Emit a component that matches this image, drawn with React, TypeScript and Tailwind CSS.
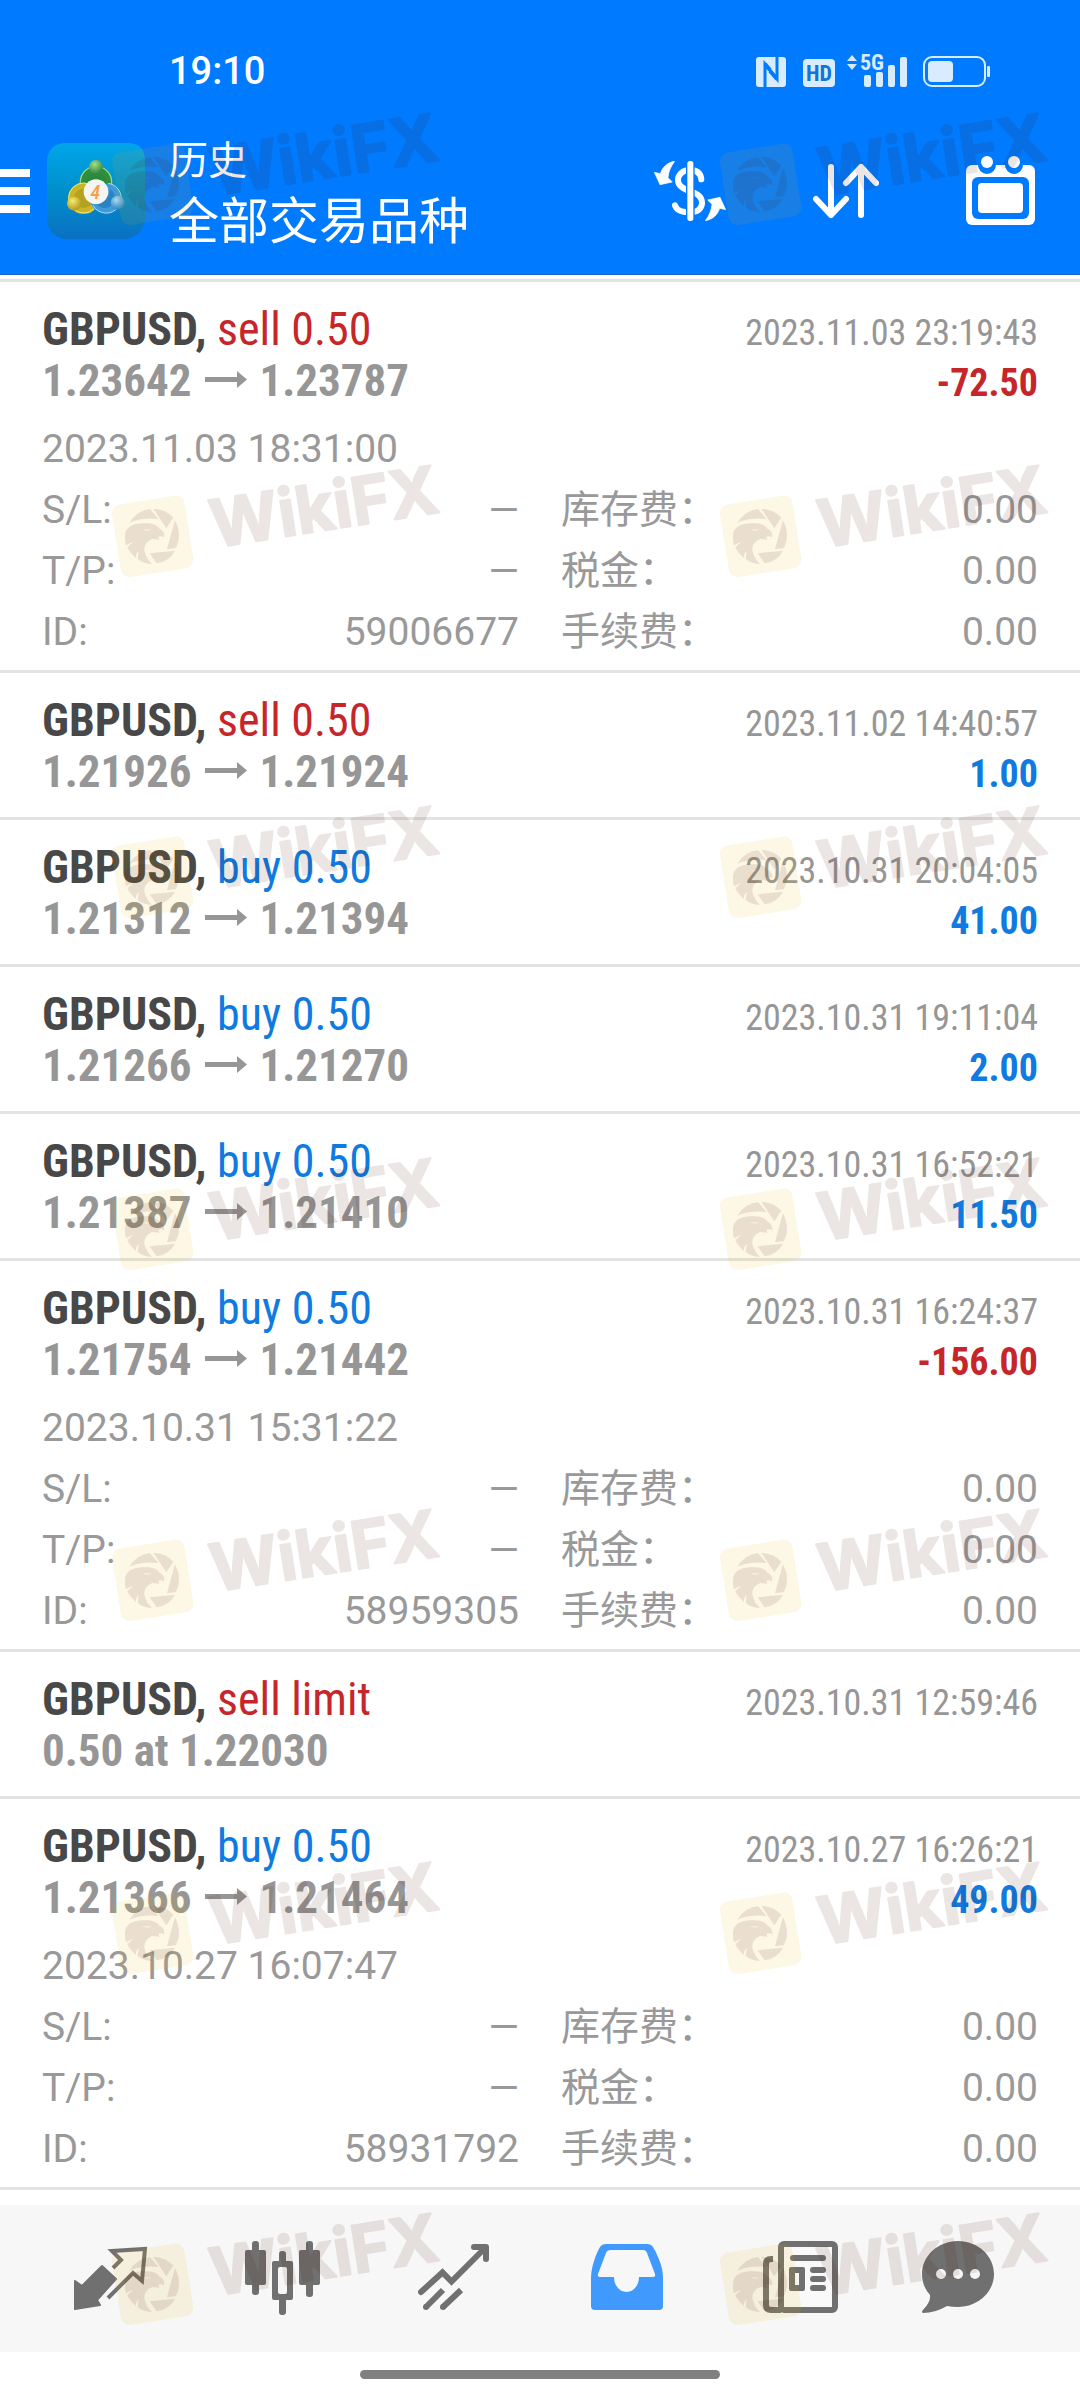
import type { ReactNode } from "react";

type Trade = {
  side: "buy" | "sell";
  action: string;
  open?: string;
  close?: string;
  note?: string;
  closedAt: string;
  profit?: string;
  details?: { openedAt: string; id: string };
};

const trades: Trade[] = [
  { side: "sell", action: "sell 0.50", open: "1.23642", close: "1.23787", closedAt: "2023.11.03 23:19:43", profit: "-72.50", details: { openedAt: "2023.11.03 18:31:00", id: "59006677" } },
  { side: "sell", action: "sell 0.50", open: "1.21926", close: "1.21924", closedAt: "2023.11.02 14:40:57", profit: "1.00" },
  { side: "buy", action: "buy 0.50", open: "1.21312", close: "1.21394", closedAt: "2023.10.31 20:04:05", profit: "41.00" },
  { side: "buy", action: "buy 0.50", open: "1.21266", close: "1.21270", closedAt: "2023.10.31 19:11:04", profit: "2.00" },
  { side: "buy", action: "buy 0.50", open: "1.21387", close: "1.21410", closedAt: "2023.10.31 16:52:21", profit: "11.50" },
  { side: "buy", action: "buy 0.50", open: "1.21754", close: "1.21442", closedAt: "2023.10.31 16:24:37", profit: "-156.00", details: { openedAt: "2023.10.31 15:31:22", id: "58959305" } },
  { side: "sell", action: "sell limit", note: "0.50 at 1.22030", closedAt: "2023.10.31 12:59:46" },
  { side: "buy", action: "buy 0.50", open: "1.21366", close: "1.21464", closedAt: "2023.10.27 16:26:21", profit: "49.00", details: { openedAt: "2023.10.27 16:07:47", id: "58931792" } },
];

const stampTops = [
  "top-[106px]",
  "top-[458px]",
  "top-[799px]",
  "top-[1151px]",
  "top-[1502px]",
  "top-[1855px]",
  "top-[2206px]",
];

function StatusBar() {
  return (
    <div className="flex items-center justify-between pt-[50px] pr-[90px] pb-[15px] pl-[169px]">
      <span className="text-[38px] leading-[42px] font-medium">19:10</span>
      <div className="flex items-end text-[#d8ebff]">
        <svg width="30" height="30" viewBox="0 0 30 30" className="mr-[17px]" aria-label="NFC">
          <rect width="30" height="30" rx="3" fill="currentColor" />
          <path d="M9 30V7l12 15V0" fill="none" stroke="#007aff" strokeWidth="3" />
          <path d="M9 7l5 6M21 22l-7-8" fill="none" stroke="#007aff" strokeWidth="4" />
        </svg>
        <svg width="32" height="28" viewBox="0 0 32 28" className="mr-3 overflow-visible">
          <rect width="32" height="28" rx="4" fill="currentColor" />
          <text x="16" y="22" textAnchor="middle" className="font-['Roboto_Condensed'] text-[22px] font-bold" fill="#1273d8">HD</text>
        </svg>
        <svg width="61" height="32" viewBox="0 0 61 32" className="mr-[15px] overflow-visible" fill="currentColor">
          <path d="M5 0l5 6H0zM5 15l5-6H0z" />
          <text x="13" y="15" className="font-['Roboto_Condensed'] text-[22px] font-bold">5G</text>
          <rect x="17" y="20" width="7" height="12" rx="2" />
          <rect x="29" y="17" width="7" height="15" rx="2" />
          <rect x="41" y="10" width="7" height="22" rx="2" />
          <rect x="53" y="2" width="7" height="30" rx="2" />
        </svg>
        <svg width="67" height="31" viewBox="0 0 67 31">
          <rect x="1" y="1" width="61" height="29" rx="8" fill="none" stroke="currentColor" strokeWidth="2" />
          <rect x="5" y="5" width="25" height="21" rx="4" fill="currentColor" />
          <rect x="64" y="10" width="3" height="11" rx="1" fill="currentColor" />
        </svg>
      </div>
    </div>
  );
}

function AppLogo() {
  return (
    <svg width="98" height="96" viewBox="22 38 294 288" aria-hidden="true">
      <defs>
        <linearGradient id="tile" x1="0" y1="0" x2="0" y2="1">
          <stop offset="0" stopColor="#00a6ea" />
          <stop offset="0.5" stopColor="#008fcb" />
          <stop offset="1" stopColor="#0a70c2" />
        </linearGradient>
        <radialGradient id="green" cx="0.4" cy="0.3" r="0.8">
          <stop offset="0" stopColor="#a5dc8a" />
          <stop offset="1" stopColor="#1f7a34" />
        </radialGradient>
        <radialGradient id="yellow" cx="0.4" cy="0.3" r="0.8">
          <stop offset="0" stopColor="#f6ea6c" />
          <stop offset="1" stopColor="#a88f14" />
        </radialGradient>
        <radialGradient id="blue" cx="0.4" cy="0.3" r="0.8">
          <stop offset="0" stopColor="#a3dcf6" />
          <stop offset="1" stopColor="#1b78bd" />
        </radialGradient>
      </defs>
      <path d="M72 38H270Q316 44 316 90V270Q308 316 262 326H72Q26 316 22 270V90Q26 44 72 38Z" fill="url(#tile)" />
      <circle cx="169" cy="157" r="40" fill="#2b8a3c" stroke="#2d8f3f" strokeWidth="20" />
      <circle cx="169" cy="155" r="47" fill="none" stroke="#9bd68a" strokeWidth="4" />
      <circle cx="132" cy="204" r="38" fill="#b5a222" stroke="#c9b526" strokeWidth="18" />
      <circle cx="132" cy="203" r="45" fill="none" stroke="#efe37a" strokeWidth="3" />
      <path d="M160 215A38 38 0 1 0 206 166L200 190Z" fill="#2b83c2" stroke="#3f9bd8" strokeWidth="16" strokeLinejoin="round" />
      <path d="M160 225A45 45 0 1 0 206 159" fill="none" stroke="#a9dcf7" strokeWidth="3" />
      <circle cx="169" cy="110" r="21" fill="url(#green)" />
      <circle cx="103" cy="220" r="21" fill="url(#yellow)" />
      <circle cx="234" cy="217" r="21" fill="url(#blue)" />
      <circle cx="169" cy="184" r="37" fill="#f7f5f2" />
      <text x="167" y="206" textAnchor="middle" className="font-['Roboto_Condensed'] text-[60px] font-medium italic" fill="#f3a04c">4</text>
    </svg>
  );
}

function Header() {
  return (
    <header className="border-b border-[#1268c4] bg-[#007aff] text-white">
      <StatusBar />
      <div className="flex items-center justify-between pt-5 pr-[45px] pb-[19px]">
        <div className="flex items-center">
          <button type="button" aria-label="Menu" className="mr-[17px]">
            <svg width="30" height="44" viewBox="0 0 30 44" fill="currentColor">
              <path d="M0 0h30v8H0zM0 18h30v8H0zM0 36h30v8H0z" />
            </svg>
          </button>
          <AppLogo />
          <div className="ml-6 pb-2 font-['Noto_Sans_CJK_SC',sans-serif]">
            <p className="text-[39px] leading-[60px]">历史</p>
            <h1 className="text-[50px] leading-[60px]">全部交易品种</h1>
          </div>
        </div>
        <div className="flex items-center gap-[87px]">
          <button type="button" aria-label="Currency">
            <svg width="72" height="60" viewBox="42 63 216 180" fill="#fff">
              <path d="M184 118C182 98 168 90 150 90C126 90 113 106 114 122C115 142 138 150 156 156C182 164 187 178 186 192C182 212 166 217 150 217C126 217 110 212 105 196" fill="none" stroke="#fff" strokeWidth="18" strokeLinecap="round" />
              <rect x="142" y="63" width="18" height="180" rx="8" stroke="#007aff" strokeWidth="8" paintOrder="stroke" />
              <path id="turn" d="M104 64C82 67 67 82 61 101L43 97L60 134L97 126L84 113C86 94 92 80 104 64Z" stroke="#fff" strokeWidth="2" strokeLinejoin="round" />
              <use href="#turn" transform="rotate(180 150 153)" />
            </svg>
          </button>
          <button type="button" aria-label="Sort">
            <svg width="66" height="56" viewBox="0 0 66 56" fill="none" stroke="#fff" strokeWidth="6" strokeLinecap="round" strokeLinejoin="round">
              <path d="M18 4v48M3 36l15 16 15-16M48 52V4M33 20L48 4l15 16" />
            </svg>
          </button>
          <button type="button" aria-label="Calendar">
            <svg width="69" height="70" viewBox="0 0 69 70">
              <rect y="9" width="69" height="60" rx="6" fill="#fff" />
              <path d="M12 9a9 9 0 0 0 18 0zM39 9a9 9 0 0 0 18 0z" fill="#007aff" />
              <circle cx="21" cy="6" r="6" fill="#fff" />
              <circle cx="48" cy="6" r="6" fill="#fff" />
              <rect x="6" y="21" width="57" height="42" rx="6" fill="#007aff" />
              <rect x="12" y="27" width="45" height="30" rx="4" fill="#fff" />
            </svg>
          </button>
        </div>
      </div>
    </header>
  );
}

function DetailRow({ label, value }: { label: string; value: string }) {
  return (
    <div className="flex justify-between">
      <dt>{label}</dt>
      <dd>{value}</dd>
    </div>
  );
}

function TradeRow({ trade }: { trade: Trade }) {
  const loss = trade.profit?.startsWith("-");

  return (
    <li className="border-b-[3px] border-[#e3e3e3] px-[42px] pt-[22px]">
      <div className="font-['Roboto_Condensed',Roboto,sans-serif] leading-[51px]">
        <div className="flex items-baseline justify-between">
          <h2 className="text-[46px]">
            <span className="font-bold text-[#484848]">GBPUSD,</span>{" "}
            <span className={trade.side === "buy" ? "text-[#0f7ae0]" : "text-[#c6262a]"}>{trade.action}</span>
          </h2>
          <time className="text-[36px] leading-[44px] text-[#969696]">{trade.closedAt}</time>
        </div>
        <div className="flex items-baseline justify-between font-bold">
          <p className="text-[45px] text-[#969696]">
            {trade.note ?? (
              <>
                {trade.open}
                <svg width="42" height="34" viewBox="0 0 42 34" className="mx-[13px] inline-block align-baseline" fill="currentColor">
                  <path d="M0 15h32V9l10 8.500L32 26v-6H0z" />
                </svg>
                {trade.close}
              </>
            )}
          </p>
          {trade.profit && (
            <p className={loss ? "text-[38px] leading-[44px] text-[#c6262a]" : "text-[38px] leading-[44px] text-[#0f7ae0]"}>
              {trade.profit}
            </p>
          )}
        </div>
      </div>
      {trade.details ? (
        <div className="pt-[13px] pb-[7px] text-[39px] leading-[61px] text-[#999]">
          <p>{trade.details.openedAt}</p>
          <div className="grid grid-cols-2 gap-[42px]">
            <dl>
              <DetailRow label="S/L:" value="—" />
              <DetailRow label="T/P:" value="—" />
              <DetailRow label="ID:" value={trade.details.id} />
            </dl>
            <dl>
              <DetailRow label="库存费：" value="0.00" />
              <DetailRow label="税金：" value="0.00" />
              <DetailRow label="手续费：" value="0.00" />
            </dl>
          </div>
        </div>
      ) : (
        <div className="pb-5" />
      )}
    </li>
  );
}

function TabButton({ label, active, className, children }: { label: string; active?: boolean; className?: string; children: ReactNode }) {
  return (
    <button type="button" aria-label={label} className={`${active ? "text-[#4099fc]" : "text-[#707070]"} ${className ?? ""}`}>
      <svg width="76" height="76" viewBox="0 0 76 76" fill="currentColor">
        {children}
      </svg>
    </button>
  );
}

function TabBar() {
  return (
    <nav className="flex items-center justify-between bg-[#f7f7f7] pt-[35px] pr-[84px] pb-9 pl-[72px]">
      <TabButton label="Quotes">
        <path d="M3 41l7 5 20-20 14 13-19 21 3 5-25 4z" stroke="currentColor" strokeWidth="2" strokeLinejoin="round" />
        <path d="M41 28l8-8-9-9 33-2-3 32-9-8-25 25" fill="none" stroke="currentColor" strokeWidth="4" />
      </TabButton>
      <TabButton label="Charts">
        <rect x="0" y="10" width="21" height="35" rx="2" />
        <rect x="7" y="1" width="7" height="54" rx="3" />
        <rect x="34" y="11" width="7" height="64" rx="3" />
        <rect x="27" y="21" width="21" height="39" rx="2" />
        <rect x="33" y="27" width="9" height="27" rx="2" fill="#f7f7f7" />
        <rect x="54" y="10" width="21" height="35" rx="2" />
        <rect x="61" y="1" width="7" height="56" rx="3" />
      </TabButton>
      <TabButton label="Trade">
        <g fill="none" stroke="currentColor" strokeWidth="6">
          <path d="M3 52L24.500 32.500l9 9L67 8" strokeLinecap="round" />
          <path d="M56 7h12v12" strokeLinecap="round" strokeLinejoin="round" />
          <path d="M8 67l17-17M25 67l18-17" />
        </g>
        <circle cx="8" cy="67" r="3" />
        <circle cx="25" cy="67" r="3" />
      </TabButton>
      <TabButton label="History" active>
        <path d="M1 38C1 26 7 12 10 7Q12 4 16 4H57Q61 4 63 7C67 14 73 26 73 38V66Q73 70 69 70H5Q1 70 1 66Z" />
        <path d="M21 10H53Q56 10 57 13L65 34Q66 37 63 37H49C49 46 43 52 36.500 52S24 46 24 37H10Q7 37 8 34L16 13Q17 10 21 10Z" fill="#f7f7f7" />
      </TabButton>
      <TabButton label="News">
        <rect x="18" y="4" width="54" height="66" rx="3" fill="#f9f9f9" stroke="currentColor" strokeWidth="6" />
        <path d="M10 19H8Q3 19 3 24V65Q3 70 8 70H18" fill="none" stroke="currentColor" strokeWidth="6" />
        <rect x="27" y="15" width="36" height="6" rx="3" />
        <path fillRule="evenodd" d="M28 27h12q2 0 2 2v20q0 2-2 2H28q-2 0-2-2V29q0-2 2-2zM32 33v12h4V33z" />
        <rect x="47" y="27" width="16" height="6" rx="3" />
        <rect x="47" y="36" width="16" height="6" rx="3" />
        <rect x="47" y="45" width="16" height="6" rx="3" />
      </TabButton>
      <TabButton label="Messages" className="-ml-4">
        <path d="M38 1C58 1 74 16 74 34S58 67 38 67Q32 67 27 66Q15 73 3 73Q1 72 3 70Q11 62 10 55Q2 46 2 34C2 16 18 1 38 1Z" />
        <circle cx="21" cy="34" r="5" fill="#f7f7f7" />
        <circle cx="38" cy="34" r="5" fill="#f7f7f7" />
        <circle cx="55" cy="34" r="5" fill="#f7f7f7" />
      </TabButton>
    </nav>
  );
}

function Stamp({ className }: { className: string }) {
  return (
    <svg width="340" height="130" viewBox="0 -30 340 130" className={`absolute overflow-visible ${className}`}>
      <g transform="scale(0.3333)">
        <rect x="36" y="35" width="220" height="220" rx="26" fill="#f0b40a" fillOpacity="0.1" transform="rotate(-9 146 145)" />
        <g fill="#4b140a" fillOpacity="0.106" fillRule="evenodd">
          <path d="M76 104Q98 68 138 63L163 93Q115 88 76 104Z" />
          <path d="M148 62Q186 64 208 89L187 121Z" />
          <path d="M213 96Q236 140 216 180L189 184Z" />
          <path d="M137 196L213 188Q196 220 158 226Z" />
          <path d="M63 146C62 116 90 105 120 106C146 104 160 112 166 122C178 126 183 138 180 148Q172 143 162 146Q166 149 166 155L146 153C128 158 118 174 122 192Q128 214 144 227C126 228 108 220 101 212L104 188Q94 198 96 210C84 200 76 190 70 178L88 162Q74 166 66 172Q62 160 63 146ZM116 122Q128 132 142 124Q130 126 116 122Z" />
        </g>
      </g>
      <text
        x="110"
        y="60"
        transform="rotate(-9 110 60)"
        className="font-[Inter] text-[66px] font-bold opacity-[0.106]"
        fill="#4b140a"
        stroke="#4b140a"
        strokeWidth="2"
        strokeLinejoin="round"
      >
        WikiFX
      </text>
    </svg>
  );
}

export default function App() {
  return (
    <div className="relative overflow-hidden bg-white font-[Roboto,'Noto_Sans_CJK_SC',sans-serif]">
      <Header />
      <main className="pt-1 pb-[15px]">
        <ul className="border-t-[3px] border-[#e3e3e3]">
          {trades.map((trade) => (
            <TradeRow key={trade.closedAt} trade={trade} />
          ))}
        </ul>
      </main>
      <TabBar />
      <div className="pt-[18px] pb-[21px]">
        <div className="mx-auto h-[9px] w-1/3 rounded-full bg-[#808080]" />
      </div>
      <div className="pointer-events-none absolute inset-0" aria-hidden="true">
        {stampTops.map((top) => (
          <div key={top}>
            <Stamp className={`left-[104px] ${top}`} />
            <Stamp className={`left-[712px] ${top}`} />
          </div>
        ))}
      </div>
    </div>
  );
}
